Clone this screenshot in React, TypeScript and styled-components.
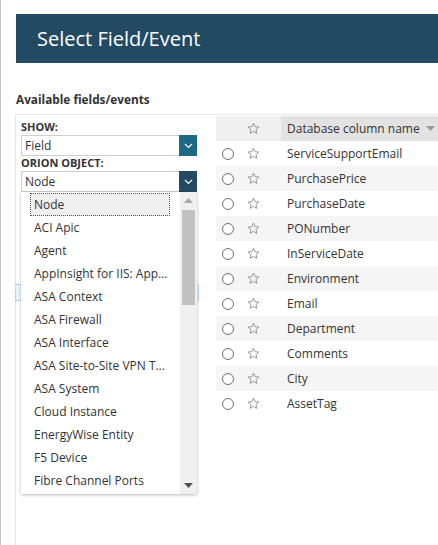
import styled, { createGlobalStyle } from "styled-components";

const GlobalStyle = createGlobalStyle`
  html, body {
    margin: 0;
    padding: 0;
    background: #ffffff;
    overflow: hidden;
  }
  body {
    font-family: "Open Sans", "Noto Sans", sans-serif;
    color: #333333;
  }
`;

const Page = styled.div`
  height: 545px;
  border-left: 1px solid #c4c4c4;
  padding: 14px 0 0 15px;
  display: flex;
  flex-direction: column;
  box-sizing: border-box;
`;

const TitleBar = styled.div`
  height: 49px;
  background: #224a63;
  color: #ffffff;
  font-size: 20px;
  display: flex;
  align-items: center;
  padding-left: 21px;
  flex-shrink: 0;
`;

const SectionLabel = styled.div`
  margin: 28px 0 0 0;
  font-size: 11.8px;
  font-weight: 700;
  color: #333333;
  height: 16px;
  line-height: 16px;
`;

const Panel = styled.div`
  margin: 7px 0 0 -1px;
  flex: 1;
  border-top: 1px solid #e6e6e6;
  border-left: 1px solid #e6e6e6;
  display: grid;
  grid-template-columns: 200px 1fr;
`;

const LeftColumn = styled.div`
  padding: 5px 19px 0 5px;
  display: flex;
  flex-direction: column;
`;

const FieldLabel = styled.div`
  font-size: 11px;
  font-weight: 700;
  color: #333333;
  height: 14px;
  line-height: 14px;
  margin-bottom: 1px;
  text-transform: uppercase;
`;

const SelectWrap = styled.div`
  position: relative;
`;

const SelectBox = styled.div<{ $accent: string }>`
  height: 21px;
  display: flex;
  border: 1px solid #cfcfcf;
  border-right: none;
  box-sizing: border-box;
  background: #ffffff;
  font-size: 12px;
  color: #333333;

  span {
    flex: 1;
    padding-left: 3px;
    line-height: 19px;
  }

  i {
    width: 18px;
    margin: -1px 0;
    background: ${(p) => p.$accent};
    display: flex;
    align-items: center;
    justify-content: center;
  }
`;

const Dropdown = styled.div`
  position: absolute;
  top: 21px;
  left: 0;
  right: 0;
  height: 302px;
  background: #ffffff;
  box-shadow: 0 1px 3px rgba(0, 0, 0, 0.28);
  display: flex;
  z-index: 2;
`;

const Options = styled.div`
  flex: 1;
  padding: 1px 0 0 9px;
  overflow: hidden;
`;

const Option = styled.div<{ $active?: boolean }>`
  width: 140px;
  height: 23px;
  line-height: 21px;
  box-sizing: border-box;
  padding-left: 3px;
  font-size: 12px;
  color: #333333;
  white-space: nowrap;
  overflow: hidden;
  text-overflow: ellipsis;
  border: 1px ${(p) => (p.$active ? "dotted #555" : "solid transparent")};
  background: ${(p) => (p.$active ? "#efefef" : "transparent")};
`;

const Scrollbar = styled.div`
  width: 17px;
  background: #f0f0f0;
  display: flex;
  flex-direction: column;
  align-items: center;
  padding: 6px 0;
  box-sizing: border-box;
`;

const Thumb = styled.div`
  width: 13px;
  height: 95px;
  background: #c1c1c1;
  margin-top: 7px;
`;

const Spacer = styled.div`
  flex: 1;
`;

const TreeRow = styled.div`
  margin: 92px 0 0 -6px;
  width: 184px;
  height: 17px;
  box-sizing: border-box;
  border: 1px dotted #8cc3e6;
  background: #e8f4fb;
`;

const RightColumn = styled.div`
  padding-top: 1px;
`;

const Table = styled.div`
  display: flex;
  flex-direction: column;
`;

const HeaderRow = styled.div`
  height: 25px;
  display: grid;
  grid-template-columns: 25px 40px 1fr;
  background: #f0f0f0;
  align-items: center;
`;

const HeaderName = styled.div`
  height: 25px;
  background: #e2e2e2;
  display: flex;
  align-items: center;
  padding-left: 6px;
  font-size: 12px;
  color: #333333;
  gap: 6px;
`;

const Row = styled.div<{ $alt: boolean }>`
  height: 25px;
  display: grid;
  grid-template-columns: 25px 40px 1fr;
  align-items: center;
  background: ${(p) => (p.$alt ? "#f5f5f5" : "#ffffff")};
`;

const Cell = styled.div`
  display: flex;
  align-items: center;
  padding-left: 6px;
`;

const NameCell = styled.div`
  padding-left: 6px;
  font-size: 12px;
  color: #333333;
`;

const Radio = styled.span`
  width: 12px;
  height: 12px;
  border: 1px solid #6f6f6f;
  border-radius: 50%;
  box-sizing: border-box;
  background: #ffffff;
`;

const Chevron = () => (
  <svg width="9" height="6" viewBox="0 0 9 6">
    <polyline points="1,1 4.5,4.5 8,1" fill="none" stroke="#ffffff" strokeWidth="1.2" />
  </svg>
);

const Star = () => (
  <svg width="13" height="13" viewBox="0 0 24 24">
    <polygon
      points="12,2 14.9,8.6 22,9.3 16.6,14 18.2,21 12,17.3 5.8,21 7.4,14 2,9.3 9.1,8.6"
      fill="none"
      stroke="#8a8a8a"
      strokeWidth="1.6"
      strokeLinejoin="round"
    />
  </svg>
);

const Triangle = ({ up, color }: { up?: boolean; color: string }) => (
  <svg width="9" height="5" viewBox="0 0 9 5">
    <polygon points={up ? "0,5 9,5 4.5,0" : "0,0 9,0 4.5,5"} fill={color} />
  </svg>
);

const objects = [
  "Node",
  "ACI Apic",
  "Agent",
  "AppInsight for IIS: Application",
  "ASA Context",
  "ASA Firewall",
  "ASA Interface",
  "ASA Site-to-Site VPN Tunnel",
  "ASA System",
  "Cloud Instance",
  "EnergyWise Entity",
  "F5 Device",
  "Fibre Channel Ports",
];

const columns = [
  "ServiceSupportEmail",
  "PurchasePrice",
  "PurchaseDate",
  "PONumber",
  "InServiceDate",
  "Environment",
  "Email",
  "Department",
  "Comments",
  "City",
  "AssetTag",
];

const App = () => {
  return (
    <>
      <GlobalStyle />
      <Page>
        <TitleBar>Select Field/Event</TitleBar>
        <SectionLabel>Available fields/events</SectionLabel>
        <Panel>
          <LeftColumn>
            <FieldLabel>Show:</FieldLabel>
            <SelectBox $accent="#1e6a86">
              <span>Field</span>
              <i>
                <Chevron />
              </i>
            </SelectBox>
            <FieldLabel>Orion Object:</FieldLabel>
            <SelectWrap>
              <SelectBox $accent="#224a63">
                <span>Node</span>
                <i>
                  <Chevron />
                </i>
              </SelectBox>
              <Dropdown>
                <Options>
                  {objects.map((o, i) => (
                    <Option key={o} $active={i === 0}>
                      {o}
                    </Option>
                  ))}
                </Options>
                <Scrollbar>
                  <Triangle up color="#a8a8a8" />
                  <Thumb />
                  <Spacer />
                  <Triangle color="#505050" />
                </Scrollbar>
              </Dropdown>
            </SelectWrap>
            <TreeRow />
          </LeftColumn>
          <RightColumn>
            <Table>
              <HeaderRow>
                <span />
                <Cell>
                  <Star />
                </Cell>
                <HeaderName>
                  Database column name
                  <Triangle color="#9a9a9a" />
                </HeaderName>
              </HeaderRow>
              {columns.map((c, i) => (
                <Row key={c} $alt={i % 2 === 1}>
                  <Cell>
                    <Radio />
                  </Cell>
                  <Cell>
                    <Star />
                  </Cell>
                  <NameCell>{c}</NameCell>
                </Row>
              ))}
            </Table>
          </RightColumn>
        </Panel>
      </Page>
    </>
  );
};

export default App;
